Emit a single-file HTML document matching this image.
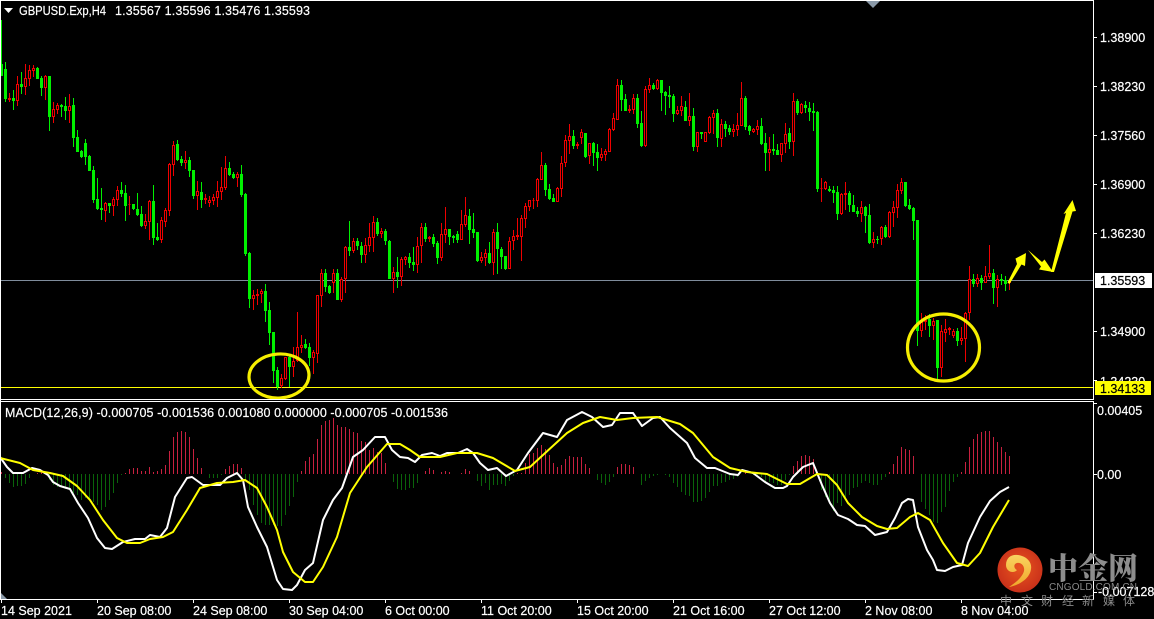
<!DOCTYPE html>
<html><head><meta charset="utf-8"><title>GBPUSD H4</title>
<style>html,body{margin:0;padding:0;background:#000;overflow:hidden}svg{display:block}text{font-family:"Liberation Sans","Noto Sans CJK SC",sans-serif;font-size:12.5px;fill:#fff;stroke:#fff;stroke-width:.2}.k{fill:#000;stroke:#000}.w{stroke:none}</style>
</head><body>
<svg width="1154" height="619" viewBox="0 0 1154 619" xmlns="http://www.w3.org/2000/svg">
<defs><radialGradient id="lg" cx="50%" cy="45%" r="55%"><stop offset="0" stop-color="#e8551f"/><stop offset="1" stop-color="#c9301a"/></radialGradient>
<linearGradient id="sw" x1="0" y1="0" x2="0" y2="1"><stop offset="0" stop-color="#f9d560"/><stop offset="1" stop-color="#f0a52a"/></linearGradient></defs>
<rect width="1154" height="619" fill="#000"/>
<g shape-rendering="crispEdges">
<rect x="0" y="280" width="1093" height="1" fill="#7f8c9c"/>
<rect x="0" y="387" width="1093" height="1" fill="#ffff00"/>
<path fill="none" stroke="#00f000" stroke-width="1" d="M1.5 20V76M5.5 62V102M13.5 90V110M21.5 72V94M37.5 67V79M41.5 76V96M49.5 76V131M61.5 104V117M65.5 97V120M73.5 98V147M77.5 130V152M81.5 150V158M85.5 139V165M89.5 155V171M93.5 166V203M97.5 178V210M101.5 188V220M109.5 203V213M121.5 182V197M125.5 185V221M133.5 204V210M137.5 193V216M141.5 206V227M153.5 185V245M157.5 223V241M177.5 140V161M181.5 156V166M189.5 157V177M193.5 170V199M201.5 182V208M229.5 162V176M233.5 172V179M241.5 165V197M245.5 193V256M249.5 252V308M265.5 284V322M269.5 302V345M273.5 332V383M277.5 367V390M289.5 356V387M305.5 339V349M309.5 343V366M325.5 269V292M329.5 285V294M337.5 269V300M349.5 221V256M357.5 238V250M361.5 242V263M377.5 218V236M385.5 229V245M389.5 240V279M397.5 257V288M409.5 253V268M413.5 247V271M425.5 223V242M433.5 234V247M437.5 241V264M449.5 229V245M453.5 235V243M457.5 231V243M469.5 209V244M473.5 213V238M477.5 232V262M489.5 242V264M497.5 223V274M501.5 247V269M505.5 256V270M545.5 163V196M549.5 184V200M553.5 194V202M573.5 130V149M585.5 133V158M593.5 142V166M597.5 144V171M621.5 80V111M625.5 94V111M637.5 94V128M641.5 111V147M653.5 83V90M661.5 80V111M665.5 91V115M669.5 86V108M673.5 94V122M685.5 101V121M693.5 108V151M701.5 132V139M717.5 109V147M725.5 121V137M729.5 125V135M745.5 96V130M749.5 125V135M761.5 118V145M765.5 133V171M773.5 134V155M777.5 144V155M789.5 128V149M797.5 99V115M805.5 101V113M809.5 102V121M813.5 103V131M817.5 111V192M829.5 186V192M833.5 186V203M837.5 186V220M849.5 191V212M853.5 195V212M857.5 207V217M865.5 206V233M869.5 204V244M877.5 236V244M885.5 225V238M905.5 182V207M909.5 199V210M913.5 207V240M917.5 220V346M929.5 314V337M937.5 320V379M957.5 328V346M973.5 274V287M981.5 275V290M993.5 269V304M1001.5 274V285M1005.5 276V291"/>
<path fill="none" stroke="#00f000" stroke-width="3" d="M1.5 64V76M5.5 69V99M13.5 98V101M21.5 84V87M37.5 68V79M41.5 78V88M49.5 76V117M61.5 105V107M65.5 106V111M73.5 105V138M77.5 137V152M81.5 151V157M85.5 143V157M89.5 156V171M93.5 170V200M97.5 199V209M101.5 208V210M109.5 203V206M121.5 190V194M125.5 193V206M133.5 204V209M137.5 209V215M141.5 214V226M153.5 201V238M157.5 237V240M177.5 144V160M181.5 159V163M189.5 160V171M193.5 170V196M201.5 192V200M229.5 168V175M233.5 174V178M241.5 174V195M245.5 194V254M249.5 253V299M265.5 291V311M269.5 310V333M273.5 332V371M277.5 370V387M289.5 357V367M305.5 344V348M309.5 347V358M325.5 273V287M329.5 286V293M337.5 273V300M349.5 247V251M357.5 241V246M361.5 246V255M377.5 222V234M385.5 231V241M389.5 241V279M397.5 272V277M409.5 257V263M413.5 262V265M425.5 227V239M433.5 237V244M437.5 243V258M449.5 229V237M453.5 236V238M457.5 234V240M469.5 216V230M473.5 229V233M477.5 232V261M489.5 253V263M497.5 232V249M501.5 249V257M505.5 256V269M545.5 165V190M549.5 189V199M553.5 198V202M573.5 136V146M585.5 133V157M593.5 143V153M597.5 152V158M621.5 85V100M625.5 99V111M637.5 98V124M641.5 123V146M653.5 85V89M661.5 80V93M665.5 92V96M669.5 95V97M673.5 96V114M685.5 107V121M693.5 116V147M701.5 132V134M717.5 113V138M725.5 124V129M729.5 128V132M745.5 98V127M749.5 126V131M761.5 126V144M765.5 143V153M773.5 149V151M777.5 150V155M789.5 133V142M797.5 101V113M805.5 105V108M809.5 108V112M813.5 111V113M817.5 112V189M829.5 189V191M833.5 190V193M837.5 192V214M849.5 193V205M853.5 205V212M857.5 211V214M865.5 207V216M869.5 215V243M877.5 239V240M885.5 227V237M905.5 182V206M909.5 205V209M913.5 208V221M917.5 220V331M929.5 319V326M937.5 320V368M957.5 331V341M973.5 279V284M981.5 278V283M993.5 273V288M1001.5 279V281M1005.5 280V284"/>
<path fill="none" stroke="#f00000" stroke-width="1" d="M9.5 93V102M17.5 76V106M25.5 64V95M29.5 65V86M33.5 65V77M45.5 75V100M53.5 102V123M57.5 103V114M69.5 94V123M105.5 202V222M113.5 197V216M117.5 186V206M129.5 196V215M145.5 214V229M149.5 200V240M161.5 217V243M165.5 208V227M169.5 163V216M173.5 141V176M185.5 151V169M197.5 181V210M205.5 194V204M209.5 196V207M213.5 194V205M217.5 181V207M221.5 167V200M225.5 156V190M237.5 172V187M253.5 290V310M257.5 289V305M261.5 289V303M281.5 374V388M285.5 357V380M293.5 347V377M297.5 312V362M301.5 335V353M313.5 350V374M317.5 295V363M321.5 269V307M333.5 269V293M341.5 277V302M345.5 246V293M353.5 238V253M365.5 238V263M369.5 223V252M373.5 216V252M381.5 228V238M393.5 267V293M401.5 257V286M405.5 256V265M417.5 237V273M421.5 223V263M429.5 236V242M441.5 223V261M445.5 207V243M461.5 210V240M465.5 197V227M481.5 252V263M485.5 249V266M493.5 229V275M509.5 237V269M513.5 230V250M517.5 218V240M521.5 215V261M525.5 203V228M529.5 200V211M533.5 198V209M537.5 178V207M541.5 152V180M557.5 187V202M561.5 156V197M565.5 135V167M569.5 124V154M577.5 142V149M581.5 129V144M589.5 143V164M601.5 148V161M605.5 149V161M609.5 128V152M613.5 113V131M617.5 79V120M629.5 105V113M633.5 94V114M645.5 86V147M649.5 78V93M657.5 79V90M677.5 106V115M681.5 96V116M689.5 93V126M697.5 132V152M705.5 132V142M709.5 116V134M713.5 110V134M721.5 119V147M733.5 124V137M737.5 113V136M741.5 82V126M753.5 128V133M757.5 120V135M769.5 137V171M781.5 143V162M785.5 123V153M793.5 93V156M801.5 103V114M821.5 178V202M825.5 181V190M841.5 193V215M845.5 182V210M861.5 201V222M873.5 232V248M881.5 226V245M889.5 211V238M893.5 201V227M897.5 184V218M901.5 178V194M921.5 313V337M925.5 315V330M933.5 318V340M941.5 325V377M945.5 319V342M949.5 327V335M953.5 329V338M961.5 327V345M965.5 312V362M969.5 266V320M977.5 274V287M985.5 266V283M989.5 245V279M997.5 275V307M1009.5 280V290"/>
<path fill="#000" stroke="#f00000" stroke-width="1" d="M8.5 98.5h2V99.5h-2zM16.5 84.5h2V100.5h-2zM24.5 78.5h2V86.5h-2zM28.5 70.5h2V78.5h-2zM32.5 68.5h2V70.5h-2zM44.5 76.5h2V87.5h-2zM52.5 109.5h2V116.5h-2zM56.5 105.5h2V109.5h-2zM68.5 106.5h2V110.5h-2zM104.5 203.5h2V210.5h-2zM112.5 199.5h2V205.5h-2zM116.5 190.5h2V199.5h-2zM128.5 204.5h2V204.5h-2zM144.5 221.5h2V225.5h-2zM148.5 201.5h2V221.5h-2zM160.5 220.5h2V239.5h-2zM164.5 210.5h2V221.5h-2zM168.5 164.5h2V210.5h-2zM172.5 145.5h2V164.5h-2zM184.5 160.5h2V162.5h-2zM196.5 191.5h2V195.5h-2zM204.5 198.5h2V199.5h-2zM208.5 200.5h2V202.5h-2zM212.5 197.5h2V200.5h-2zM216.5 191.5h2V197.5h-2zM220.5 187.5h2V191.5h-2zM224.5 168.5h2V187.5h-2zM236.5 174.5h2V177.5h-2zM252.5 295.5h2V298.5h-2zM256.5 294.5h2V295.5h-2zM260.5 291.5h2V293.5h-2zM280.5 378.5h2V385.5h-2zM284.5 357.5h2V378.5h-2zM292.5 361.5h2V366.5h-2zM296.5 347.5h2V360.5h-2zM300.5 345.5h2V347.5h-2zM312.5 352.5h2V357.5h-2zM316.5 295.5h2V353.5h-2zM320.5 273.5h2V295.5h-2zM332.5 273.5h2V282.5h-2zM340.5 279.5h2V299.5h-2zM344.5 247.5h2V278.5h-2zM352.5 241.5h2V250.5h-2zM364.5 245.5h2V254.5h-2zM368.5 237.5h2V245.5h-2zM372.5 222.5h2V237.5h-2zM380.5 231.5h2V233.5h-2zM392.5 272.5h2V278.5h-2zM400.5 259.5h2V276.5h-2zM404.5 257.5h2V259.5h-2zM416.5 246.5h2V264.5h-2zM420.5 227.5h2V245.5h-2zM428.5 237.5h2V238.5h-2zM440.5 234.5h2V257.5h-2zM444.5 229.5h2V234.5h-2zM460.5 224.5h2V239.5h-2zM464.5 215.5h2V224.5h-2zM480.5 257.5h2V260.5h-2zM484.5 253.5h2V257.5h-2zM492.5 232.5h2V262.5h-2zM508.5 241.5h2V268.5h-2zM512.5 236.5h2V240.5h-2zM516.5 235.5h2V236.5h-2zM520.5 218.5h2V236.5h-2zM524.5 206.5h2V218.5h-2zM528.5 200.5h2V206.5h-2zM532.5 200.5h2V200.5h-2zM536.5 179.5h2V200.5h-2zM540.5 165.5h2V179.5h-2zM556.5 188.5h2V201.5h-2zM560.5 163.5h2V188.5h-2zM564.5 140.5h2V162.5h-2zM568.5 136.5h2V140.5h-2zM576.5 144.5h2V145.5h-2zM580.5 132.5h2V137.5h-2zM588.5 143.5h2V155.5h-2zM600.5 154.5h2V157.5h-2zM604.5 151.5h2V154.5h-2zM608.5 129.5h2V151.5h-2zM612.5 118.5h2V129.5h-2zM616.5 85.5h2V119.5h-2zM628.5 109.5h2V110.5h-2zM632.5 98.5h2V109.5h-2zM644.5 89.5h2V145.5h-2zM648.5 85.5h2V89.5h-2zM656.5 80.5h2V88.5h-2zM676.5 110.5h2V113.5h-2zM680.5 106.5h2V110.5h-2zM688.5 116.5h2V120.5h-2zM696.5 132.5h2V146.5h-2zM704.5 132.5h2V141.5h-2zM708.5 117.5h2V132.5h-2zM712.5 113.5h2V117.5h-2zM720.5 124.5h2V138.5h-2zM732.5 129.5h2V131.5h-2zM736.5 125.5h2V129.5h-2zM740.5 98.5h2V125.5h-2zM752.5 129.5h2V131.5h-2zM756.5 126.5h2V129.5h-2zM768.5 149.5h2V152.5h-2zM780.5 143.5h2V154.5h-2zM784.5 134.5h2V143.5h-2zM792.5 101.5h2V141.5h-2zM800.5 104.5h2V112.5h-2zM820.5 188.5h2V188.5h-2zM824.5 182.5h2V188.5h-2zM840.5 194.5h2V213.5h-2zM844.5 193.5h2V194.5h-2zM860.5 207.5h2V213.5h-2zM872.5 239.5h2V242.5h-2zM880.5 227.5h2V238.5h-2zM888.5 212.5h2V236.5h-2zM892.5 207.5h2V212.5h-2zM896.5 190.5h2V207.5h-2zM900.5 182.5h2V190.5h-2zM920.5 322.5h2V330.5h-2zM924.5 320.5h2V321.5h-2zM932.5 321.5h2V325.5h-2zM940.5 331.5h2V367.5h-2zM944.5 329.5h2V332.5h-2zM948.5 328.5h2V329.5h-2zM952.5 331.5h2V335.5h-2zM960.5 338.5h2V340.5h-2zM964.5 313.5h2V338.5h-2zM968.5 279.5h2V312.5h-2zM976.5 278.5h2V283.5h-2zM984.5 276.5h2V282.5h-2zM988.5 273.5h2V276.5h-2zM996.5 279.5h2V287.5h-2zM1008.5 281.5h2V282.5h-2z"/>
<path fill="none" stroke="#c8203f" stroke-width="1" d="M1.5 474v-2M37.5 474v-1M41.5 474v-2M45.5 474v-1M125.5 474v-1M129.5 474v-5M133.5 474v-6M137.5 474v-6M141.5 474v-3M145.5 474v-3M149.5 474v-7M153.5 474v-2M157.5 474v-3M161.5 474v-5M165.5 474v-9M169.5 474v-23M173.5 474v-37M177.5 474v-42M181.5 474v-43M185.5 474v-42M189.5 474v-37M193.5 474v-25M197.5 474v-16M201.5 474v-6M225.5 474v-5M229.5 474v-8M233.5 474v-10M237.5 474v-10M241.5 474v-6M301.5 474v-3M305.5 474v-13M309.5 474v-17M313.5 474v-20M317.5 474v-35M321.5 474v-49M325.5 474v-53M329.5 474v-54M333.5 474v-56M337.5 474v-49M341.5 474v-47M345.5 474v-47M349.5 474v-45M353.5 474v-42M357.5 474v-41M361.5 474v-33M365.5 474v-32M369.5 474v-24M373.5 474v-26M377.5 474v-22M381.5 474v-21M385.5 474v-11M425.5 474v-3M429.5 474v-6M433.5 474v-4M441.5 474v-2M445.5 474v-3M449.5 474v-2M461.5 474v-1M465.5 474v-5M469.5 474v-3M517.5 474v-1M521.5 474v-1M525.5 474v-11M529.5 474v-20M533.5 474v-21M537.5 474v-26M541.5 474v-29M545.5 474v-25M549.5 474v-19M553.5 474v-11M557.5 474v-7M561.5 474v-9M565.5 474v-15M569.5 474v-18M573.5 474v-17M577.5 474v-17M581.5 474v-17M585.5 474v-10M589.5 474v-6M617.5 474v-7M621.5 474v-10M625.5 474v-10M629.5 474v-9M633.5 474v-7M745.5 474v-3M793.5 474v-8M797.5 474v-13M801.5 474v-18M805.5 474v-19M809.5 474v-18M813.5 474v-15M889.5 474v-2M893.5 474v-10M897.5 474v-18M901.5 474v-27M905.5 474v-25M909.5 474v-24M913.5 474v-18M961.5 474v-2M965.5 474v-12M969.5 474v-27M973.5 474v-35M977.5 474v-40M981.5 474v-42M985.5 474v-43M989.5 474v-43M993.5 474v-37M997.5 474v-32M1001.5 474v-27M1005.5 474v-22M1009.5 474v-18"/>
<path fill="none" stroke="#0a640a" stroke-width="1" d="M5.5 474v4M9.5 474v9M13.5 474v13M17.5 474v12M21.5 474v12M25.5 474v10M29.5 474v4M49.5 474v6M53.5 474v11M57.5 474v13M61.5 474v13M65.5 474v15M69.5 474v16M73.5 474v19M77.5 474v21M81.5 474v26M85.5 474v24M89.5 474v26M93.5 474v28M97.5 474v31M101.5 474v36M105.5 474v33M109.5 474v26M113.5 474v19M117.5 474v9M121.5 474v1M209.5 474v4M213.5 474v4M217.5 474v4M221.5 474v1M245.5 474v6M249.5 474v16M253.5 474v31M257.5 474v41M261.5 474v49M265.5 474v51M269.5 474v51M273.5 474v51M277.5 474v52M281.5 474v52M285.5 474v41M289.5 474v32M293.5 474v23M297.5 474v8M393.5 474v8M397.5 474v15M401.5 474v16M405.5 474v16M409.5 474v14M413.5 474v14M417.5 474v9M477.5 474v7M481.5 474v12M485.5 474v9M489.5 474v16M493.5 474v11M497.5 474v11M501.5 474v10M505.5 474v12M509.5 474v7M513.5 474v2M597.5 474v6M601.5 474v9M605.5 474v11M609.5 474v8M613.5 474v3M641.5 474v11M645.5 474v7M649.5 474v4M653.5 474v2M657.5 474v1M665.5 474v1M669.5 474v3M673.5 474v9M677.5 474v13M681.5 474v18M685.5 474v21M689.5 474v22M693.5 474v28M697.5 474v28M701.5 474v27M705.5 474v24M709.5 474v18M713.5 474v12M717.5 474v12M721.5 474v9M725.5 474v8M729.5 474v6M733.5 474v5M737.5 474v3M753.5 474v1M757.5 474v1M761.5 474v3M765.5 474v9M769.5 474v8M773.5 474v9M777.5 474v11M781.5 474v11M785.5 474v6M789.5 474v1M821.5 474v16M825.5 474v23M829.5 474v29M833.5 474v37M837.5 474v29M841.5 474v32M845.5 474v26M849.5 474v21M853.5 474v14M857.5 474v13M861.5 474v9M865.5 474v7M869.5 474v9M873.5 474v11M877.5 474v11M881.5 474v6M885.5 474v3M921.5 474v28M925.5 474v35M929.5 474v41M933.5 474v48M937.5 474v49M941.5 474v38M945.5 474v33M949.5 474v17M953.5 474v8M957.5 474v3"/>
</g>
<polyline fill="none" stroke="#fff" stroke-width="2" stroke-linejoin="round" points="0,457 7,467 13,473 23,473 32,468 40,470 48,475 53,482 60,486 70,489 78,503 88,518 97,538 105,548 112,549 123,542 135,539 145,539 150,535 160,537 167,528 175,497 187,478 192,477 203,485 220,485 227,478 237,473 243,480 248,507 257,527 267,547 277,580 283,589 292,590 297,585 305,570 313,563 323,520 333,500 342,488 353,457 363,450 375,437 385,437 392,450 400,457 408,458 415,462 422,455 432,453 440,456 447,453 458,453 467,449 473,453 480,463 488,470 497,468 506,476 517,470 528,453 543,433 557,437 567,420 582,412 592,417 603,427 612,425 620,413 633,413 642,426 653,418 660,417 670,428 687,443 695,458 707,468 715,468 730,474 738,475 742,470 753,473 765,482 775,488 783,488 787,486 793,477 803,467 813,463 822,485 830,503 838,515 848,519 857,525 865,526 875,535 887,532 895,518 902,503 908,499 913,500 918,527 927,550 933,560 937,570 945,571 953,567 962,565 968,543 980,517 990,501 1000,492 1009,487"/>
<polyline fill="none" stroke="#ffff00" stroke-width="2" stroke-linejoin="round" points="0,458 20,463 33,470 50,473 63,476 77,486 90,500 103,520 117,538 127,543 140,543 150,539 163,537 173,532 187,510 200,488 217,483 233,482 245,480 257,488 267,507 277,530 283,552 293,572 305,582 313,582 323,567 337,537 350,493 367,467 387,444 400,444 410,450 420,457 440,457 457,453 477,453 493,458 515,471 530,467 543,455 567,433 583,423 600,417 617,420 633,418 657,417 680,424 693,433 713,457 730,468 747,472 767,474 787,484 800,484 817,474 827,475 837,485 848,503 862,517 877,526 887,529 897,528 910,517 918,513 930,520 943,543 957,563 968,566 980,553 993,527 1009,500"/>
<g fill="none" stroke="#f6ee00" stroke-width="3.2">
<ellipse cx="279" cy="376" rx="30" ry="22" transform="rotate(-4 279 376)"/>
<ellipse cx="943.5" cy="347.5" rx="36" ry="33.5"/>
</g>
<g fill="#ffff00">
<polygon points="1007.5,282.5 1017,264 1015.5,258.5 1026,253 1025,266 1021.5,264.5 1009.5,284"/>
<polygon points="1028,250 1042,262 1044.5,259.5 1053,272 1039,269.5 1041,266.5"/>
<polygon points="1051,272 1066,213 1063.5,214 1072.5,200 1076,211 1072.5,211.5 1054,272"/>
</g>
<g shape-rendering="crispEdges" fill="#fff">
<rect x="0" y="0" width="1094" height="1"/>
<rect x="0" y="0" width="1" height="599"/>
<rect x="0" y="399" width="1094" height="1"/>
<rect x="0" y="401" width="1094" height="1"/>
<rect x="0" y="599" width="1094" height="1"/>
<rect x="1093" y="0" width="1" height="399"/>
<rect x="1093" y="401" width="1" height="199"/>
<path d="M1094 37h3v1h-3zM1094 86h3v1h-3zM1094 135h3v1h-3zM1094 184h3v1h-3zM1094 233h3v1h-3zM1094 331h3v1h-3zM1094 380h3v1h-3zM1094 403h3v1h-3zM1094 474h3v1h-3zM1094 592h3v1h-3zM1 600h1v3h-1zM97 600h1v3h-1zM193 600h1v3h-1zM289 600h1v3h-1zM385 600h1v3h-1zM481 600h1v3h-1zM577 600h1v3h-1zM673 600h1v3h-1zM769 600h1v3h-1zM865 600h1v3h-1zM961 600h1v3h-1z"/>
</g>
<polygon points="866,1 880,1 873,8" fill="#8a99a8"/>
<polygon points="1,593 7,599 1,599" fill="#8a99a8"/>
<polygon points="4,8 13,8 8.5,13" fill="#fff"/>
<text x="19" y="15" textLength="87" lengthAdjust="spacingAndGlyphs">GBPUSD.Exp,H4</text>
<text x="115" y="15" textLength="195" lengthAdjust="spacing">1.35567 1.35596 1.35476 1.35593</text>
<text x="5" y="417" textLength="443" lengthAdjust="spacing">MACD(12,26,9) -0.000705 -0.001536 0.001080 0.000000 -0.000705 -0.001536</text>
<text x="1100" y="42">1.38900</text>
<text x="1100" y="91">1.38230</text>
<text x="1100" y="140">1.37560</text>
<text x="1100" y="189">1.36900</text>
<text x="1100" y="238">1.36230</text>
<text x="1100" y="336">1.34900</text>
<text x="1100" y="386">1.34230</text>
<rect x="1095" y="273" width="57" height="15" fill="#fff" shape-rendering="crispEdges"/>
<text x="1100" y="285" class="k">1.35593</text>
<rect x="1095" y="381" width="56" height="14" fill="#ffff00" shape-rendering="crispEdges"/>
<text x="1100" y="393" class="k">1.34133</text>
<text x="1097" y="415">0.00405</text>
<text x="1097" y="479">0.00</text>
<text x="1098" y="596">-0.007128</text>
<text x="1" y="615">14 Sep 2021</text>
<text x="97" y="615">20 Sep 08:00</text>
<text x="193" y="615">24 Sep 08:00</text>
<text x="289" y="615">30 Sep 04:00</text>
<text x="385" y="615">6 Oct 00:00</text>
<text x="481" y="615">11 Oct 20:00</text>
<text x="577" y="615">15 Oct 20:00</text>
<text x="673" y="615">21 Oct 16:00</text>
<text x="769" y="615">27 Oct 12:00</text>
<text x="865" y="615">2 Nov 08:00</text>
<text x="961" y="615">8 Nov 04:00</text>
<circle cx="1020" cy="570" r="22.5" fill="url(#lg)"/>
<path d="M1006 565C1006 556 1014 553 1022 556C1028 558 1032 563 1031 569C1030 578 1020 585 1009 587C1015 583 1022 578 1024 571C1025 566 1021 562 1017 563C1013 564 1014 569 1017 570C1014 574 1006 572 1006 565Z" fill="url(#sw)"/>
<text x="1048" y="579" class="w" style="font-family:'Noto Serif CJK SC','Noto Sans CJK SC',serif;font-size:30px;font-weight:900;fill:#8d8d8d">中金网</text>
<text x="1049" y="590" class="w" textLength="88" lengthAdjust="spacing" style="font-size:10px;fill:#8a8a8a">CNGOLD.COM.CN</text>
<text x="1000" y="605" class="w" style="font-size:12px;fill:#8a8a8a">中</text>
<text x="1021" y="605" class="w" style="font-size:12px;fill:#8a8a8a">文</text>
<text x="1041" y="605" class="w" style="font-size:12px;fill:#8a8a8a">财</text>
<text x="1062" y="605" class="w" style="font-size:12px;fill:#8a8a8a">经</text>
<text x="1082" y="605" class="w" style="font-size:12px;fill:#8a8a8a">新</text>
<text x="1103" y="605" class="w" style="font-size:12px;fill:#8a8a8a">媒</text>
<text x="1123" y="605" class="w" style="font-size:12px;fill:#8a8a8a">体</text>
</svg>
</body></html>
